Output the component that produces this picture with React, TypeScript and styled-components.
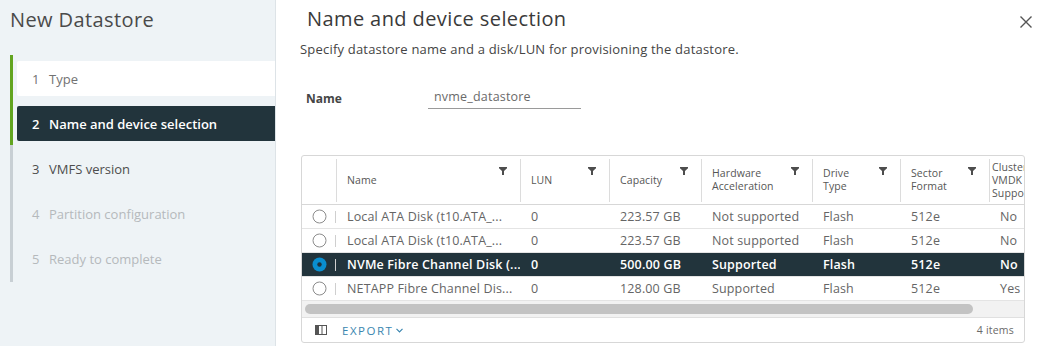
import React from "react";
import styled, { createGlobalStyle } from "styled-components";

const Global = createGlobalStyle`
  html, body { margin: 0; padding: 0; background: #fff; }
  body { font-family: "Open Sans", "Lato", sans-serif; color: #565656; }
  * { box-sizing: border-box; }
`;

const Page = styled.div`
  display: flex;
  width: 1046px;
  height: 346px;
  overflow: hidden;
`;

const Sidebar = styled.aside`
  width: 276px;
  flex-shrink: 0;
  background: #eef3f6;
  border-right: 1px solid #dde3e7;
  padding: 7px 0 0 10px;
`;

const SideTitle = styled.h1`
  margin: 0;
  font-size: 20px;
  font-weight: 400;
  letter-spacing: 0.4px;
  line-height: 26px;
  color: #4a4a4a;
`;

const StepList = styled.div`
  margin-top: 22px;
  display: flex;
  flex-direction: column;
  gap: 10px;
  padding: 6px 0 6px 7px;
  background: linear-gradient(#62a420, #62a420) 0 0 / 3px 90px no-repeat,
    linear-gradient(#c8cfd4, #c8cfd4) 0 0 / 3px 100% no-repeat;
`;

const Step = styled.div<{ $state: "done" | "active" | "next" | "disabled" }>`
  height: 35px;
  display: flex;
  align-items: center;
  padding-left: 15px;
  font-size: 13px;
  background: ${(p) =>
    p.$state === "done" ? "#fff" : p.$state === "active" ? "#22343c" : "transparent"};
  color: ${(p) =>
    p.$state === "done"
      ? "#727272"
      : p.$state === "active"
      ? "#fff"
      : p.$state === "next"
      ? "#4d4d4d"
      : "#b5b9bc"};
  font-weight: ${(p) => (p.$state === "active" ? 600 : 400)};
  border-radius: 2px 0 0 2px;
`;

const StepNum = styled.span`
  width: 17px;
`;

const Main = styled.main`
  flex: 1;
  padding: 6px 21px 0 24px;
  display: flex;
  flex-direction: column;
  min-width: 0;
`;

const HeaderRow = styled.div`
  display: flex;
  align-items: center;
  justify-content: space-between;
  height: 26px;
`;

const Title = styled.h2`
  margin: 0 0 0 7px;
  font-size: 20px;
  font-weight: 400;
  letter-spacing: 0.4px;
  color: #3a3a3a;
  line-height: 26px;
`;

const CloseBtn = styled.button`
  border: 0;
  background: none;
  padding: 0;
  margin-right: -8px;
  margin-top: 6px;
  width: 14px;
  height: 14px;
  display: flex;
`;

const Subtitle = styled.p`
  margin: 8px 0 0 0;
  font-size: 13px;
  letter-spacing: 0.2px;
  line-height: 18px;
  color: #444;
`;

const NameRow = styled.div`
  display: flex;
  align-items: center;
  margin-top: 29px;
  padding-left: 6px;
`;

const NameLabel = styled.label`
  width: 122px;
  font-size: 12px;
  font-weight: 700;
  color: #454545;
`;

const NameInput = styled.div`
  width: 153px;
  height: 22px;
  padding-left: 6px;
  font-size: 12.5px;
  letter-spacing: 0.2px;
  color: #6a6a6a;
  border-bottom: 1px solid #9a9a9a;
  line-height: 20px;
`;

const Table = styled.div`
  margin-top: 46px;
  margin-left: 1px;
  border: 1px solid #d7d7d7;
  border-radius: 3px;
  overflow: hidden;
  flex-shrink: 0;
`;

const Scroller = styled.div`
  overflow: hidden;
`;

const cols = "34px 184px 89px 92px 111px 88px 89px 80px";

const HeadRow = styled.div`
  display: grid;
  grid-template-columns: ${cols};
  height: 49px;
  border-bottom: 1px solid #d7d7d7;
  align-items: center;
`;

const HeadCell = styled.div<{ $divider?: boolean; $tight?: boolean }>`
  position: relative;
  height: 43px;
  display: flex;
  align-items: center;
  padding: 0 20px 0 ${(p) => (p.$tight ? "2px" : "10px")};
  font-size: 10.5px;
  letter-spacing: 0.1px;
  line-height: 13px;
  color: #565656;
  border-left: ${(p) => (p.$divider ? "1px solid #dcdcdc" : "none")};
  white-space: pre-line;
  overflow: hidden;
`;

const FilterIcon = styled.svg`
  position: absolute;
  right: 13px;
  top: 8px;
`;

const Row = styled.div<{ $selected?: boolean }>`
  display: grid;
  grid-template-columns: ${cols};
  height: 24px;
  align-items: center;
  border-bottom: 1px solid #e4e4e4;
  background: ${(p) => (p.$selected ? "#22343c" : "#fff")};
  color: ${(p) => (p.$selected ? "#fff" : "#656565")};
  font-weight: ${(p) => (p.$selected ? 600 : 400)};
  font-size: 12.5px;
  letter-spacing: 0.15px;
`;

const RadioCell = styled.div`
  display: flex;
  align-items: center;
  padding-left: 10px;
  height: 100%;
  position: relative;
  &::after {
    content: "";
    position: absolute;
    right: 0;
    top: 6px;
    height: 12px;
    border-right: 1px solid #cfcfcf;
  }
`;

const Cell = styled.div`
  padding-left: 11px;
  white-space: nowrap;
  overflow: hidden;
`;

const ScrollTrack = styled.div`
  height: 17px;
  background: #f2f2f2;
  border-bottom: 1px solid #e0e0e0;
  padding: 3px 0 3px 3px;
`;

const ScrollThumb = styled.div`
  width: 668px;
  height: 10px;
  border-radius: 5px;
  background: #c3c3c3;
`;

const Footer = styled.div`
  height: 24px;
  display: flex;
  align-items: center;
  padding: 0 10px 0 13px;
`;

const ExportBtn = styled.button`
  border: 0;
  background: none;
  margin-left: 15px;
  padding: 0;
  font-family: inherit;
  font-size: 11.5px;
  letter-spacing: 1.5px;
  color: #3a86b0;
  display: flex;
  align-items: center;
  gap: 3px;
`;

const Count = styled.span`
  margin-left: auto;
  font-size: 10.5px;
  letter-spacing: 0.2px;
  color: #6a6a6a;
`;

const Radio = ({ checked }: { checked?: boolean }) => (
  <svg width="15" height="15" viewBox="0 0 15 15">
    {checked ? (
      <>
        <circle cx="7.5" cy="7.5" r="7" fill="#0a8fd0" />
        <circle cx="7.5" cy="7.5" r="2.2" fill="#1d3340" />
      </>
    ) : (
      <circle cx="7.5" cy="7.5" r="6.5" fill="#fff" stroke="#8c8c8c" strokeWidth="1" />
    )}
  </svg>
);

const Funnel = () => (
  <FilterIcon width="8" height="8" viewBox="0 0 8 8">
    <path d="M0 0 H8 V1.3 L5 4 V8 H3 V4 L0 1.3 Z" fill="#4d4d4d" />
  </FilterIcon>
);

const headers: { label: string; filter: boolean }[] = [
  { label: "", filter: false },
  { label: "Name", filter: true },
  { label: "LUN", filter: true },
  { label: "Capacity", filter: true },
  { label: "Hardware\nAcceleration", filter: true },
  { label: "Drive\nType", filter: true },
  { label: "Sector\nFormat", filter: true },
  { label: "Clustered\nVMDK\nSupported", filter: false },
];

const rows = [
  ["Local ATA Disk (t10.ATA_...", "0", "223.57 GB", "Not supported", "Flash", "512e", "No"],
  ["Local ATA Disk (t10.ATA_...", "0", "223.57 GB", "Not supported", "Flash", "512e", "No"],
  ["NVMe Fibre Channel Disk (...", "0", "500.00 GB", "Supported", "Flash", "512e", "No"],
  ["NETAPP Fibre Channel Dis...", "0", "128.00 GB", "Supported", "Flash", "512e", "Yes"],
];

const steps: { n: number; label: string; state: "done" | "active" | "next" | "disabled" }[] = [
  { n: 1, label: "Type", state: "done" },
  { n: 2, label: "Name and device selection", state: "active" },
  { n: 3, label: "VMFS version", state: "next" },
  { n: 4, label: "Partition configuration", state: "disabled" },
  { n: 5, label: "Ready to complete", state: "disabled" },
];

export default function App() {
  return (
    <>
      <Global />
      <Page>
        <Sidebar>
          <SideTitle>New Datastore</SideTitle>
          <StepList>
            {steps.map((s) => (
              <Step key={s.n} $state={s.state}>
                <StepNum>{s.n}</StepNum>
                {s.label}
              </Step>
            ))}
          </StepList>
        </Sidebar>
        <Main>
          <HeaderRow>
            <Title>Name and device selection</Title>
            <CloseBtn aria-label="Close">
              <svg width="14" height="14" viewBox="0 0 14 14">
                <path d="M1.5 1.5 L12.5 12.5 M12.5 1.5 L1.5 12.5" stroke="#555" strokeWidth="1.4" />
              </svg>
            </CloseBtn>
          </HeaderRow>
          <Subtitle>Specify datastore name and a disk/LUN for provisioning the datastore.</Subtitle>
          <NameRow>
            <NameLabel>Name</NameLabel>
            <NameInput>nvme_datastore</NameInput>
          </NameRow>
          <Table>
            <Scroller>
              <HeadRow>
                {headers.map((h, i) => (
                  <HeadCell key={i} $divider={i > 0} $tight={i === 7}>
                    {h.label}
                    {h.filter && <Funnel />}
                  </HeadCell>
                ))}
              </HeadRow>
              {rows.map((r, i) => (
                <Row key={i} $selected={i === 2}>
                  <RadioCell>
                    <Radio checked={i === 2} />
                  </RadioCell>
                  {r.map((c, j) => (
                    <Cell key={j}>{c}</Cell>
                  ))}
                </Row>
              ))}
            </Scroller>
            <ScrollTrack>
              <ScrollThumb />
            </ScrollTrack>
            <Footer>
              <svg width="12" height="10" viewBox="0 0 12 10">
                <rect x="0.5" y="0.5" width="11" height="9" fill="none" stroke="#555" />
                <rect x="0.5" y="0.5" width="3.5" height="9" fill="#555" />
                <line x1="7" y1="0.5" x2="7" y2="9.5" stroke="#555" />
              </svg>
              <ExportBtn>
                EXPORT
                <svg width="7" height="5" viewBox="0 0 7 5">
                  <path d="M0.5 0.8 L3.5 3.8 L6.5 0.8" stroke="#3a86b0" strokeWidth="1.2" fill="none" />
                </svg>
              </ExportBtn>
              <Count>4 items</Count>
            </Footer>
          </Table>
        </Main>
      </Page>
    </>
  );
}
